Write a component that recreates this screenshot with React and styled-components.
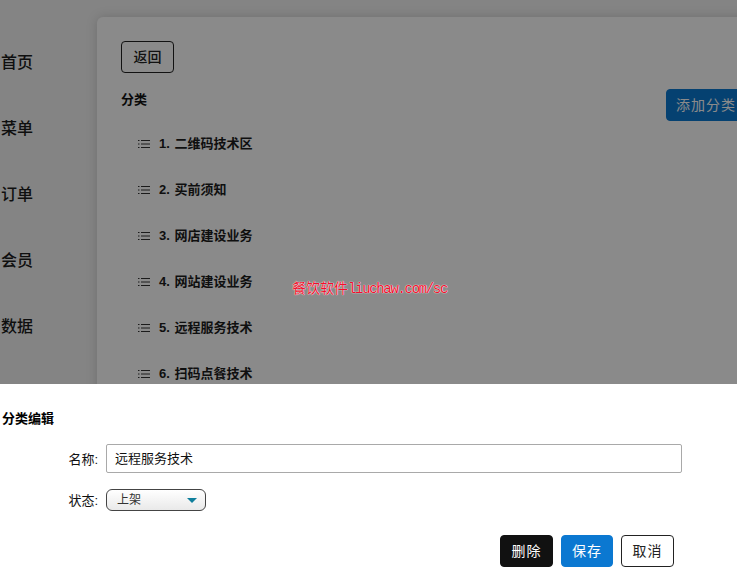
import styled, { createGlobalStyle } from "styled-components";

const GlobalStyle = createGlobalStyle`
  html, body {
    margin: 0;
    padding: 0;
    height: 100%;
    overflow: hidden;
    background: #fff;
  }
  body {
    font-family: "Liberation Sans", "Noto Sans CJK SC", sans-serif;
    color: #111;
  }
`;

const Page = styled.div`
  position: relative;
  width: 737px;
  height: 575px;
  overflow: hidden;
  background: #f4f4f4;
`;

const Layout = styled.div`
  display: flex;
  align-items: flex-start;
  padding-top: 17px;
  height: 558px;
`;

const Sidebar = styled.nav`
  flex: 0 0 97px;
  display: flex;
  flex-direction: column;
  gap: 34px;
  padding: 30px 0 0 1px;
  box-sizing: border-box;
`;

const NavItem = styled.div`
  height: 32px;
  line-height: 32px;
  font-size: 16px;
  font-weight: 500;
  color: #1c1c1c;
`;

const Panel = styled.main`
  flex: 0 0 700px;
  height: 540px;
  box-sizing: border-box;
  padding: 24px;
  background: #fff;
  border-radius: 6px;
  box-shadow: 0 0 12px rgba(0, 0, 0, 0.16);
`;

const Button = styled.button`
  box-sizing: border-box;
  width: ${(p) => p.$width || "53px"};
  height: 32px;
  padding: 0 0 0 ${(p) => p.$pad || "0"};
  font: ${(p) => p.$weight || 400} 14px/30px "Liberation Sans", "Noto Sans CJK SC", sans-serif;
  letter-spacing: ${(p) => p.$spacing || "1px"};
  color: ${(p) => p.$color || "#222"};
  background: ${(p) => p.$bg || "#fff"};
  border: 1px solid ${(p) => p.$border || "#222"};
  border-radius: 4px;
  white-space: nowrap;
  text-align: ${(p) => p.$align || "center"};
`;

const SectionHead = styled.div`
  display: flex;
  align-items: flex-start;
  height: 43px;
  margin-top: 16px;
`;

const SectionTitle = styled.h3`
  flex: 0 0 545px;
  margin: 1px 0 0;
  font-size: 13px;
  line-height: 20px;
  font-weight: 700;
`;

const CategoryList = styled.ul`
  list-style: none;
  margin: 0;
  padding: 0 0 0 17px;
  display: flex;
  flex-direction: column;
  gap: 26px;
`;

const CategoryItem = styled.li`
  display: flex;
  align-items: center;
  gap: 9px;
  height: 20px;
  font-size: 13px;
  font-weight: 700;
  word-spacing: 1px;
  color: #1c1c1c;
`;

const ListIconSvg = styled.svg`
  flex: 0 0 12px;
  margin-top: 3px;
`;

const Overlay = styled.div`
  position: absolute;
  inset: 0;
  background: rgba(0, 0, 0, 0.46);
`;

const Watermark = styled.div`
  position: absolute;
  left: 292px;
  top: 277px;
  font: 14px/20px "Noto Sans CJK SC", sans-serif;
  color: #f0102c;
  white-space: nowrap;
  text-shadow: 0 0 1px #fff, 0 0 1px #fff;
`;

const WatermarkUrl = styled.span`
  font-family: "Liberation Mono", monospace;
  font-size: 14px;
  letter-spacing: -1.33px;
`;

const Sheet = styled.section`
  position: absolute;
  left: 0;
  right: 0;
  bottom: 0;
  height: 191px;
  box-sizing: border-box;
  padding: 26px 0 0 2px;
  background: #fff;
`;

const SheetTitle = styled.h4`
  margin: 0 0 16px;
  font-size: 13px;
  line-height: 18px;
  font-weight: 700;
  color: #000;
`;

const Field = styled.div`
  display: flex;
  align-items: center;
  gap: 8px;
  margin-bottom: 16px;
  height: ${(p) => p.$height};
`;

const Label = styled.label`
  flex: 0 0 96px;
  margin-top: ${(p) => p.$lift || "0"};
  text-align: right;
  font-size: 13px;
  color: #111;
`;

const TextInput = styled.input`
  box-sizing: border-box;
  width: 576px;
  height: 29px;
  padding: 0 8px 2px;
  font: 13px "Liberation Sans", "Noto Sans CJK SC", sans-serif;
  color: #111;
  background: #fff;
  border: 1px solid #a9a9a9;
  border-radius: 2px;
`;

const SelectBox = styled.div`
  display: flex;
  align-items: center;
  justify-content: space-between;
  box-sizing: border-box;
  width: 100px;
  height: 22px;
  padding: 0 8px 3px 10px;
  font-size: 12px;
  color: #333;
  background: linear-gradient(#fff, #e9e9e9);
  border: 1px solid #444;
  border-radius: 6px;
`;

const Arrow = styled.span`
  width: 0;
  height: 0;
  margin-top: 3px;
  border-left: 5px solid transparent;
  border-right: 5px solid transparent;
  border-top: 5px solid #0f7f9c;
`;

const Actions = styled.div`
  display: flex;
  justify-content: flex-end;
  gap: 8px;
  margin-top: 24px;
  padding-right: 63px;
`;

const ListIcon = () => (
  <ListIconSvg width="12" height="10" viewBox="0 0 12 10" fill="none" stroke="#333" strokeWidth="1">
    <path d="M3 1.500h9M3 5h9M3 8.500h9M0 1.500h1.500M0 5h1.500M0 8.500h1.500" />
  </ListIconSvg>
);

const navItems = ["首页", "菜单", "订单", "会员", "数据"];
const categories = [
  "1. 二维码技术区",
  "2. 买前须知",
  "3. 网店建设业务",
  "4. 网站建设业务",
  "5. 远程服务技术",
  "6. 扫码点餐技术",
  "7. 其他服务",
];

const App = () => (
  <Page>
    <GlobalStyle />
    <Layout>
      <Sidebar>
        {navItems.map((item) => (
          <NavItem key={item}>{item}</NavItem>
        ))}
      </Sidebar>
      <Panel>
        <Button $weight={500} $spacing="0">返回</Button>
        <SectionHead>
          <SectionTitle>分类</SectionTitle>
          <Button $width="90px" $pad="9px" $bg="#0b78d1" $border="#0b78d1" $color="#fff" $align="left">
            添加分类
          </Button>
        </SectionHead>
        <CategoryList>
          {categories.map((name) => (
            <CategoryItem key={name}>
              <ListIcon />
              {name}
            </CategoryItem>
          ))}
        </CategoryList>
      </Panel>
    </Layout>
    <Overlay />
    <Watermark>
      餐饮软件<WatermarkUrl>liuchaw.com/sc</WatermarkUrl>
    </Watermark>
    <Sheet>
      <SheetTitle>分类编辑</SheetTitle>
      <Field $height="29px">
        <Label>名称:</Label>
        <TextInput defaultValue="远程服务技术" />
      </Field>
      <Field $height="22px">
        <Label $lift="-2px">状态:</Label>
        <SelectBox>
          上架
          <Arrow />
        </SelectBox>
      </Field>
      <Actions>
        <Button $bg="#111" $border="#111" $color="#fff">删除</Button>
        <Button $width="52px" $bg="#0b78d1" $border="#0b78d1" $color="#fff">保存</Button>
        <Button>取消</Button>
      </Actions>
    </Sheet>
  </Page>
);

export default App;
